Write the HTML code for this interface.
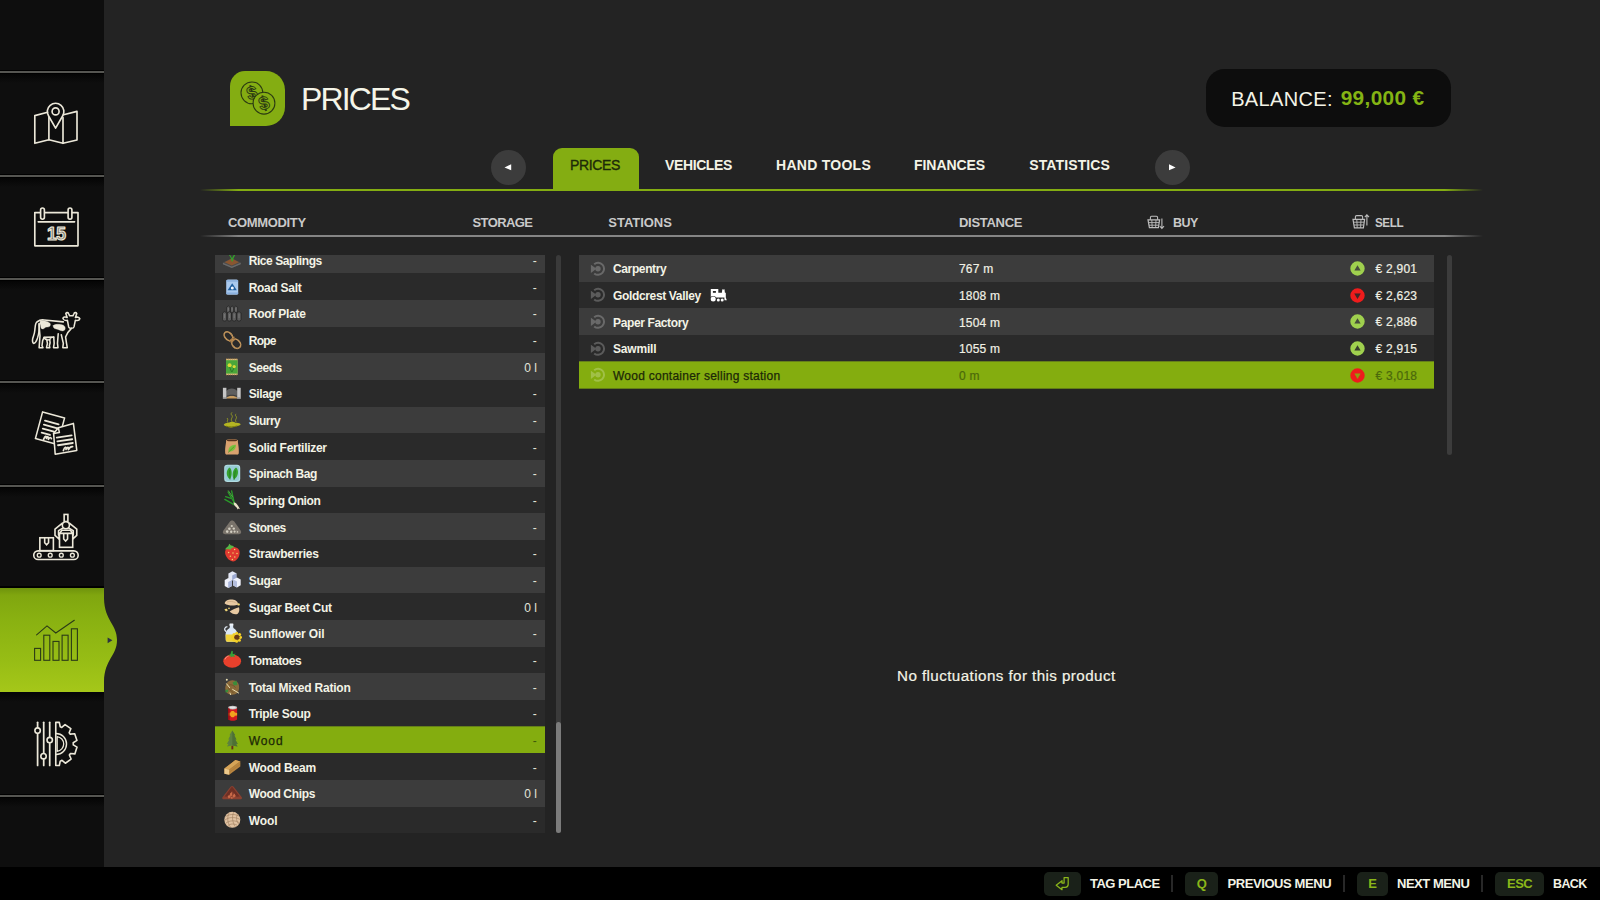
<!DOCTYPE html>
<html lang="en">
<head>
<meta charset="utf-8">
<title>Prices</title>
<style>
*{box-sizing:border-box;margin:0;padding:0}
html,body{width:1600px;height:900px;overflow:hidden;background:#232323;font-family:"Liberation Sans",sans-serif;color:#f3f3e6}
.abs{position:absolute}
#side{position:absolute;left:0;top:0;width:104px;height:867px;background:#0e0e0e}
.sep{position:absolute;left:0;width:104px;height:13px;background:linear-gradient(#000 0,#000 1px,#555551 1px,#555551 3px,#000 3px,#000 4.2px,#050505 4.2px,#0e0e0e 13px)}
.sico{position:absolute;left:0;width:104px}
#sel{position:absolute;left:0;top:588px;width:104px;height:104px;background:linear-gradient(#6f930c 0,#80a60f 7%,#89b111 30%,#97bd15 70%,#a5c719 100%)}
#foot{position:absolute;left:0;top:866.5px;width:1600px;height:34px;background:#000}
.t{position:absolute;white-space:nowrap;line-height:1}
.b{font-weight:bold}
/* header */
#ticon{position:absolute;left:230px;top:71px;width:55px;height:55px;background:#84ad12;border-radius:15px 19px 19px 0}
#bal{position:absolute;left:1206.3px;top:69px;width:244.7px;height:58.2px;border-radius:18.5px;background:#0d0d0d}
.circ{position:absolute;width:35px;height:35px;border-radius:50%;background:#3c3c3c}
#tab{position:absolute;left:553px;top:147.5px;width:85.5px;height:42px;border-radius:9px 9px 0 0;background:#84ad12}
#gline{position:absolute;left:200px;top:188.9px;width:1283px;height:2.2px;background:linear-gradient(90deg,rgba(132,173,18,0) 0,#84ad12 3%,#84ad12 97%,rgba(132,173,18,0) 100%)}
#hline{position:absolute;left:200px;top:235.1px;width:1283px;height:2px;background:linear-gradient(90deg,rgba(130,130,130,0) 0,#858585 3%,#858585 97%,rgba(130,130,130,0) 100%)}
.hd{font-size:13px;font-weight:bold;color:#c9c9c9}
/* lists */
#clist{position:absolute;left:215px;top:255px;width:330px;height:578.3px;overflow:hidden}
#clist .r{position:absolute;left:0;width:330px;height:26.667px}
#slist{position:absolute;left:579px;top:255px;width:854.5px;height:134.1px;overflow:hidden}
#slist .r{position:absolute;left:0;width:854.5px;height:26.667px}
.r.o{background:#3c3c3c}
.r.e{background:#2a2a2a}
.r.s{background:#84ad0f;box-shadow:0 0 0 .6px #8eb912}
.r .n{position:absolute;top:1.3px;line-height:26.667px;font-size:12px;font-weight:bold;white-space:nowrap;color:#f3f3e6}
.r.s .n{color:#1c2807;font-weight:normal;-webkit-text-stroke:.25px #1c2807}
.r.s .q{color:#3f5a0a}
.r .q{position:absolute;right:8.2px;top:1.3px;line-height:26.667px;font-size:12px;color:#e4e4da;white-space:nowrap}
.r svg{position:absolute}
.r .d,.r .p{position:absolute;top:1.4px;line-height:26.667px;font-size:12px;white-space:nowrap;color:#f0f0e4}
.r .p{letter-spacing:.25px;top:1.1px}
.r .d{letter-spacing:.2px}
.r .d,.r .p{-webkit-text-stroke:.2px currentColor}
.r.s .d,.r.s .p{color:#4b690b}
.sb{position:absolute;border-radius:3px;background:#3a3a3a}
.key{position:absolute;top:871.6px;height:24.7px;border-radius:5px;background:#1a2119;color:#8ab61a;font-weight:bold;font-size:13px;text-align:center;line-height:24.5px}
.fl{position:absolute;top:876.5px;font-size:13px;font-weight:bold;color:#f3f3e6;white-space:nowrap;line-height:14px}
.fs{position:absolute;top:875px;width:1.5px;height:16.5px;background:#282828}
</style>
</head>
<body>
<div id="side">
  <div class="sep" style="top:70.3px"></div>
  <div class="sep" style="top:173.6px"></div>
  <div class="sep" style="top:277px"></div>
  <div class="sep" style="top:380.2px"></div>
  <div class="sep" style="top:483.6px"></div>
  <div class="abs" style="left:0;top:586.3px;width:104px;height:1.7px;background:#000"></div>
  <div id="sel"></div>
  <div class="abs" style="left:0;top:692px;width:104px;height:10px;background:linear-gradient(#04040a 0,#04040a 1.5px,#060606 1.5px,#0e0e0e 10px)"></div>
  <div class="sep" style="top:793.6px"></div>
</div>
<svg class="abs" style="left:104px;top:588px" width="16" height="104" viewBox="104 588 16 104">
  <defs><linearGradient id="gsel" gradientUnits="userSpaceOnUse" x1="0" y1="588" x2="0" y2="692"><stop offset="0" stop-color="#6f930c"/><stop offset=".07" stop-color="#80a60f"/><stop offset=".3" stop-color="#89b111"/><stop offset=".7" stop-color="#97bd15"/><stop offset="1" stop-color="#a5c719"/></linearGradient></defs>
  <path d="M104 598.5 C104.5 621 117 624 117 640 C117 656 104.5 659 104 681.5 Z" fill="url(#gsel)"/>
  <path d="M107.6 637.4 L112.4 640.3 L107.6 643.2 Z" fill="#2c3240"/>
</svg>

<svg class="abs" style="left:0;top:0" width="104" height="867" viewBox="0 0 104 867" fill="none" stroke="#ece8d9" stroke-width="1.65" stroke-linejoin="round" stroke-linecap="round">
<g>
<path d="M47.6 112.3 L34.8 115.6 L34.8 143.3 L48.9 139.8 L63 143.3 L77 140 L77 111.4 L63.6 114.8"/>
<path d="M48.9 117.5 L48.9 139.8 M63 117.5 L63 143.3"/>
<path d="M55.6 128.2 L48.6 116 A8.3 8.3 0 1 1 62.6 116 Z"/>
<circle cx="55.6" cy="111.4" r="3.5"/>
</g>
<g>
<rect x="34.8" y="212.6" width="43.2" height="33.2"/>
<path d="M38.2 221.8 L74.6 221.8"/>
<rect x="40.6" y="208" width="3.8" height="11.2" rx="1.9" fill="#0e0e0e"/>
<rect x="68.1" y="208" width="3.8" height="11.2" rx="1.9" fill="#0e0e0e"/>
<text x="56.3" y="240.2" text-anchor="middle" font-family="Liberation Sans, sans-serif" font-weight="bold" font-size="17.5" stroke-width="1.1" fill="#7d7a70" letter-spacing="-0.5">15</text>
</g>
<g transform="translate(26 306) scale(0.053333)" stroke-width="29">
<path d="M218 292 C172 300 172 380 166 450 C160 540 132 580 124 620 C116 670 130 706 152 700 C186 690 200 640 216 600 C240 530 250 430 246 335"/>
<path d="M218 292 C245 266 290 256 340 262 L700 298"/>
<path d="M246 335 C250 430 256 500 262 560 L246 782 L318 782 L300 745 L312 650 L338 590"/>
<path d="M338 588 L520 584 M338 592 C362 640 430 652 462 612 M386 626 L402 700 L384 782 L446 782 L438 745 L452 690 L446 640"/>
<path d="M520 584 L528 700 L516 782 L600 782 L590 700 L604 520 M662 540 L700 700 L690 782 L774 782 L760 700 L742 580 C760 520 800 470 852 420"/>
<path d="M692 232 C702 206 742 200 772 216 L746 142 C760 114 792 120 802 150 L818 184 L880 184 L896 150 C906 120 938 114 952 142 L926 216 C956 200 998 210 1010 240 C1000 266 960 276 926 266 L900 392 C890 428 812 428 800 392 L776 266 C742 276 702 262 692 232 Z"/>
<path d="M270 280 C330 265 420 280 455 330 C470 380 430 400 390 395 C350 395 340 440 300 430 C270 420 280 370 265 340 C258 310 258 290 270 280 Z M510 365 C540 335 640 335 700 360 C745 385 745 440 715 460 C680 480 640 455 600 440 C560 430 500 420 510 365 Z" fill="#ece8d9" stroke-width="6"/>
</g>
<g stroke-width="1.55">
<path d="M42.6 411.9 L64.6 417.9 L57.4 444.6 L35.4 438.6 Z"/>
<path d="M45 420.6 L58.6 424.3 M43.9 424.6 L57.5 428.3 M42.8 428.6 L54 431.7 M41.7 432.6 L50 434.9" stroke-width="1.9"/>
<path d="M43.6 439.4 C45 435.6 46.8 435.4 46.4 438.4 C47.4 436 48.8 436 48.4 439.4 C49.6 437 50.8 437 51.4 438.6" stroke-width="1.7"/>
<path d="M58.4 427.8 L73.4 423.4 L76.8 450.4 L55.2 454.2 L53.6 433.4 Z" fill="#0e0e0e"/>
<path d="M58.4 427.8 L59.4 432.6 L53.6 433.4"/>
<path d="M56.8 437.6 L71.6 435.4 M57.4 441.4 L72.2 439.2 M58 445.2 L72.8 443" stroke-width="1.9"/>
<path d="M63.4 450.6 C64.6 446.6 66.6 446.2 66 449.4 C67.2 446.8 68.8 446.4 68.4 449.6 C69.6 447 71 446.4 72.6 446.6" stroke-width="1.7"/>
</g>
<g transform="translate(26 508) scale(0.064433)" stroke-width="25" stroke-linejoin="miter" fill="#0e0e0e">
<rect x="120" y="665" width="690" height="135" rx="67.5"/>
<circle cx="205" cy="732" r="30" stroke-width="21"/>
<circle cx="376" cy="732" r="30" stroke-width="21"/>
<circle cx="548" cy="732" r="30" stroke-width="21"/>
<circle cx="720" cy="732" r="30" stroke-width="21"/>
<rect x="215" y="462" width="210" height="200"/>
<path d="M290 474 L290 540 L320 572 L350 540 L350 474" fill="none"/>
<rect x="592" y="100" width="58" height="110"/>
<path d="M565 235 L450 328 L450 425 L515 482 L515 432 L505 415 L505 352 L590 302 Z" stroke-linejoin="round"/>
<path d="M673 235 L788 328 L788 425 L723 482 L723 432 L733 415 L733 352 L648 302 Z" stroke-linejoin="round"/>
<path d="M520 395 L558 345 L690 345 L725 395 Z" stroke-linejoin="round"/>
<rect x="520" y="395" width="205" height="215"/>
<path d="M585 407 L585 480 L615 512 L645 480 L645 407" fill="none"/>
<circle cx="619" cy="268" r="55"/>
</g>
<g stroke="#2b3a17" stroke-width="1.1" stroke-linejoin="miter" stroke-linecap="butt">
<rect x="34.6" y="648.4" width="6" height="11.9"/>
<rect x="43.8" y="635.2" width="6" height="25.1"/>
<rect x="53" y="641.4" width="6" height="18.9"/>
<rect x="62.1" y="635.2" width="6" height="25.1"/>
<rect x="71.4" y="628.8" width="6" height="31.5"/>
<path d="M36.6 634.8 L47 625.9 L55.8 633 L74.3 620.3" stroke-linecap="round"/>
</g>
<g transform="translate(26 714) scale(0.064433)" stroke-width="25" fill="#0e0e0e">
<path d="M180 128 L180 798" stroke-width="27"/>
<path d="M275 128 L275 798" stroke-width="27"/>
<path d="M368 128 L368 798" stroke-width="27"/>
<circle cx="180" cy="258" r="42"/>
<circle cx="368" cy="405" r="42"/>
<circle cx="272" cy="655" r="42"/>
<path d="M462 130 L517 130 L531 198 L555 209 L606 164 L696 227 L670 290 L687 313 L756 306 L791 410 L733 446 L734 479 L792 514 L758 619 L690 613 L673 636 L700 699 L611 764 L559 719 L531 732 L517 800 L462 800 Z" stroke-linejoin="round"/>
<path d="M466 302 A163 163 0 0 1 466 628" fill="none" stroke-width="22"/>
<path d="M484 350 A116 116 0 0 1 484 580 Z" fill="none" stroke-width="20"/>
</g>
</svg>
<!-- header -->
<div id="ticon"></div>
<svg class="abs" style="left:230px;top:71px" width="55" height="55" viewBox="0 0 55 55" fill="none" stroke="#2b3a12" stroke-width="1.05"><circle cx="21.9" cy="21.8" r="10.9"/><g font-family="Liberation Sans, sans-serif" font-weight="bold" font-size="18.5" text-anchor="middle" stroke-width=".95"><text x="21.9" y="28.1" transform="rotate(-14 21.9 21.8)">$</text></g><circle cx="34" cy="32.2" r="10.9" fill="#84ad12"/><g font-family="Liberation Sans, sans-serif" font-weight="bold" font-size="18.5" text-anchor="middle" stroke-width=".95"><text x="34" y="38.5" transform="rotate(-14 34 32.2)">$</text></g></svg>
<div class="t" id="title" style="left:301px;top:82.5px;font-size:32px;letter-spacing:-1.84px;color:#f5f5e8">PRICES</div>
<div id="bal"></div>
<div class="t" id="ballbl" style="left:1231.2px;top:88.5px;font-size:20px;color:#f3f3e6;letter-spacing:0.34px">BALANCE:</div>
<div class="t b" id="balval" style="left:1340.7px;top:88px;font-size:20.8px;color:#84b414;letter-spacing:.35px">99,000 €</div>

<div class="circ" style="left:490.7px;top:149.7px"></div>
<svg class="abs" style="left:503px;top:162px" width="10" height="10" viewBox="0 0 10 10"><path d="M1.5 5.4 L8.2 2.3 L8.2 8.3 Z" fill="#fff"/></svg>
<div class="circ" style="left:1155px;top:149.7px"></div>
<svg class="abs" style="left:1167px;top:162px" width="10" height="10" viewBox="0 0 10 10"><path d="M8.6 5.4 L2 2.3 L2 8.3 Z" fill="#fff"/></svg>
<div id="tab"></div>
<div class="t" id="tb0" style="left:570.0px;top:157.5px;font-size:14px;color:#1d2a08;letter-spacing:-0.35px;-webkit-text-stroke:.35px #1d2a08">PRICES</div>
<div class="t b" id="tb1" style="left:665.1px;top:157.5px;font-size:14px;letter-spacing:-0.41px">VEHICLES</div>
<div class="t b" id="tb2" style="left:776.0px;top:157.5px;font-size:14px;letter-spacing:0.27px">HAND TOOLS</div>
<div class="t b" id="tb3" style="left:914.1px;top:157.5px;font-size:14px;letter-spacing:-0.09px">FINANCES</div>
<div class="t b" id="tb4" style="left:1029.2px;top:157.5px;font-size:14px;letter-spacing:0.13px">STATISTICS</div>
<div id="gline"></div>

<div class="t hd" id="h0" style="left:228px;top:215.5px;letter-spacing:-.35px">COMMODITY</div>
<div class="t hd" id="h1" style="left:472.5px;top:215.5px;letter-spacing:-.6px">STORAGE</div>
<div class="t hd" id="h2" style="left:608.3px;top:215.5px;letter-spacing:-0.03px">STATIONS</div>
<div class="t hd" id="h3" style="left:959px;top:215.5px;letter-spacing:-0.29px">DISTANCE</div>
<div class="t hd" id="h4" style="left:1173px;top:215.5px;letter-spacing:-0.5px;transform:scaleX(.96);transform-origin:0 0">BUY</div>
<div class="t hd" id="h5" style="left:1374.7px;top:215.5px;letter-spacing:-0.5px;transform:scaleX(.9);transform-origin:0 0">SELL</div>
<svg class="abs" style="left:1146px;top:213px" width="20" height="18" viewBox="0 0 20 18" fill="none" stroke="#bdbdbd" stroke-width="1.1"><path d="M4.4 6.8 V4.4 Q4.4 3.2 5.6 3.2 H10.4 Q11.6 3.2 11.6 4.4 V6.8"/><path d="M2 6.9 H13.6 L12.4 14.6 H3.4 Z" stroke-width="1.2"/><path d="M2.6 9.6 H13 M3 12.2 H12.6 M5.8 7 L6.2 14.6 M10 7 L9.6 14.6" stroke-width=".9"/><path d="M15.9 5.4 V15.2 M13.8 13.2 L15.9 15.5 L18 13.2" stroke-width="1.1"/></svg>
<svg class="abs" style="left:1351px;top:212px" width="20" height="18" viewBox="0 0 20 18" fill="none" stroke="#bdbdbd" stroke-width="1.1"><path d="M4.4 7.2 V4.8 Q4.4 3.6 5.6 3.6 H10.4 Q11.6 3.6 11.6 4.8 V7.2"/><path d="M2 7.3 H13.6 L12.4 15.8 H3.4 Z" stroke-width="1.2"/><path d="M2.6 10.2 H13 M3 13 H12.6 M5.8 7.4 L6.2 15.8 M10 7.4 L9.6 15.8" stroke-width=".9"/><path d="M15.9 13.6 V3.2 M13.8 5.2 L15.9 2.9 L18 5.2" stroke-width="1.1"/></svg>
<div id="hline"></div>

<div id="clist">
<div class="r o" style="top:-8.33px"><svg style="left:7px;top:3.33px" width="20" height="20" viewBox="0 0 20 20"><path d="M.9 12.6 L9.8 8.2 L18.7 12.6 L18.7 14.2 L9.8 18 L.9 14.2 Z" fill="#4b4b4b"/><path d="M2.6 12.3 L9.8 8.6 L17 12.3 L9.8 15.6 Z" fill="#8a5630"/><path d="M.9 12.8 L9.8 16.4 L18.7 12.8 L18.7 14.2 L9.8 18 L.9 14.2 Z" fill="#6a6a6a"/><path d="M9.6 11.6 C9.4 8.6 8 6 5.6 3.6 C8 4.4 9.6 6.4 10 8.6 C10.6 6 12 4.2 14.4 3 C13 5.4 11.2 8 10.8 11.6 Z" fill="#35a02c"/></svg><span class="n" style="left:33.7px;letter-spacing:-0.43px">Rice Saplings</span><span class="q">-</span></div>
<div class="r e" style="top:18.33px"><svg style="left:7px;top:3.33px" width="20" height="20" viewBox="0 0 20 20"><rect x="4.2" y="2.4" width="12" height="15.4" rx="1.6" fill="#a9c9ee"/><rect x="4.2" y="3.4" width="12" height="1.1" fill="#7ea6d8"/><rect x="4.2" y="15.6" width="12" height="1.1" fill="#7ea6d8"/><path d="M10.2 6.2 L14.8 13.2 L5.6 13.2 Z" fill="#1f5f9f"/><circle cx="10.3" cy="10.9" r="1.5" fill="#f4f8ff"/></svg><span class="n" style="left:33.7px;letter-spacing:-0.29px">Road Salt</span><span class="q">-</span></div>
<div class="r o" style="top:45.00px"><svg style="left:7px;top:3.33px" width="20" height="20" viewBox="0 0 20 20"><g fill="#5e5e5e" stroke="#1f1f1f" stroke-width=".7"><path d="M4.6 4.4 q1.7 -3 3.4 0 v5 h-3.4 Z M8.4 4.4 q1.7 -3 3.4 0 v5 h-3.4 Z M12.2 4.4 q1.7 -3 3.4 0 v5 h-3.4 Z"/><path d="M.5 10 q2.1 -2.6 4.2 0 v6.4 l-1 1.6 h-2.2 l-1 -1.6 Z M5.3 10 q2.1 -2.6 4.2 0 v6.4 l-1 1.6 h-2.2 l-1 -1.6 Z M10.1 10 q2.1 -2.6 4.2 0 v6.4 l-1 1.6 h-2.2 l-1 -1.6 Z M14.9 10 q2.1 -2.6 4.2 0 v6.4 l-1 1.6 h-2.2 l-1 -1.6 Z"/></g><path d="M2.6 11 v4 M7.4 11 v4 M12.2 11 v4 M17 11 v4 M6.3 5 v2.6 M10.1 5 v2.6 M13.9 5 v2.6" stroke="#7c7c7c" stroke-width=".8"/></svg><span class="n" style="left:33.7px;letter-spacing:-0.22px">Roof Plate</span><span class="q">-</span></div>
<div class="r e" style="top:71.67px"><svg style="left:7px;top:3.33px" width="20" height="20" viewBox="0 0 20 20"><g fill="none" stroke="#c79b62" stroke-width="1.6"><ellipse cx="6.4" cy="6.2" rx="5" ry="3.5" transform="rotate(48 6.4 6.2)"/><ellipse cx="14.2" cy="13.8" rx="5" ry="3.9" transform="rotate(48 14.2 13.8)"/></g><path d="M7.4 11.4 L12.4 6.8 M8.8 12.8 L13.6 8.4" stroke="#b5864e" stroke-width="1.4"/><g fill="none" stroke="#8a6436" stroke-width=".5" stroke-dasharray=".8 1.2"><ellipse cx="6.4" cy="6.2" rx="5" ry="3.5" transform="rotate(48 6.4 6.2)"/><ellipse cx="14.2" cy="13.8" rx="5" ry="3.9" transform="rotate(48 14.2 13.8)"/></g></svg><span class="n" style="left:33.7px;letter-spacing:-0.72px">Rope</span><span class="q">-</span></div>
<div class="r o" style="top:98.33px"><svg style="left:7px;top:3.33px" width="20" height="20" viewBox="0 0 20 20"><rect x="4" y="1.8" width="11.6" height="16.2" fill="#d9bb7c"/><rect x="4" y="3.2" width="11.6" height="13.4" fill="#4aa63a"/><path d="M4 1.8 h11.6 M4 18 h11.6" stroke="#8a6a3a" stroke-width=".8" stroke-dasharray="1 1"/><circle cx="7.6" cy="8.2" r="2" fill="#d9d838"/><circle cx="12.2" cy="9.6" r="1.6" fill="#d9d838"/><path d="M7.6 10 L9.6 15 M12 11 L10 15" stroke="#2c7c28" stroke-width="1"/></svg><span class="n" style="left:33.7px;letter-spacing:-0.47px">Seeds</span><span class="q">0 l</span></div>
<div class="r e" style="top:125.00px"><svg style="left:7px;top:3.33px" width="20" height="20" viewBox="0 0 20 20"><path d="M4.2 15 L4.2 8.6 C6 4.6 13.6 4.6 15.4 8.6 L15.4 15 Z" fill="#5f5f5f"/><path d="M4 15.6 C6 11.8 13.6 11.8 15.6 15.6 Z" fill="#c89c60"/><path d="M4 13.2 C7 11.2 12.6 11.2 15.6 13.2 L15.6 14.2 C12.6 12.2 7 12.2 4 14.2 Z" fill="#3a3a3a"/><rect x=".9" y="4.8" width="3.5" height="10.9" fill="#c6c6c6"/><rect x="15.2" y="4.8" width="3.5" height="10.9" fill="#c6c6c6"/><rect x=".9" y="14.4" width="3.5" height="1.3" fill="#8f8f8f"/><rect x="15.2" y="14.4" width="3.5" height="1.3" fill="#8f8f8f"/></svg><span class="n" style="left:33.7px;letter-spacing:-0.39px">Silage</span><span class="q">-</span></div>
<div class="r o" style="top:151.67px"><svg style="left:7px;top:3.33px" width="20" height="20" viewBox="0 0 20 20"><path d="M1.8 14.6 C3 12.8 6 13.2 7.2 12.6 C9 11.4 12 11.8 13.4 12.8 C15.6 12.4 18.4 13.2 18.7 14.4 C18 15.8 15 15.6 13.6 16.6 C11 17.8 7 17.6 5.4 16.4 C3.4 16.4 1.8 15.8 1.8 14.6 Z" fill="#b4b422"/><path d="M4 16.2 C7 17.2 12 17.2 15.4 15.8" stroke="#74740f" stroke-width=".9" fill="none"/><g fill="none" stroke="#a0a822" stroke-width="1" stroke-linecap="round" opacity=".85"><path d="M5.6 12.4 C4.2 11 6.8 10 5.4 8.4"/><path d="M9.8 11.4 C7.6 9 12 7 9.6 5 C8.6 4 9.4 3 9.8 2.6"/><path d="M14 11.8 C12 9.8 16 8 13.8 6 C13 5.2 13.6 4.6 13.8 4.2"/></g></svg><span class="n" style="left:33.7px;letter-spacing:-0.53px">Slurry</span><span class="q">-</span></div>
<div class="r e" style="top:178.33px"><svg style="left:7px;top:3.33px" width="20" height="20" viewBox="0 0 20 20"><path d="M4 3.2 C6 2 14 2 16 3.2 C15.4 5 17.2 9 16.8 16 C16.8 17.4 15.6 17.8 14.4 17.6 L5.6 17.6 C4.4 17.8 3.2 17.4 3.2 16 C2.8 9 4.6 5 4 3.2 Z" fill="#d9a26e"/><path d="M4.4 3.4 C7 2.2 13 2.2 15.6 3.4 C13 4.6 7 4.6 4.4 3.4 Z" fill="#55301a"/><path d="M6.6 14.6 C5.6 10.6 9.6 7.4 14 7.8 C14 12 11 15 6.6 14.6 Z" fill="#78c23e"/><path d="M6 15.6 L12.4 9.4" stroke="#4a8a24" stroke-width=".7"/></svg><span class="n" style="left:33.7px;letter-spacing:-0.29px">Solid Fertilizer</span><span class="q">-</span></div>
<div class="r o" style="top:205.00px"><svg style="left:7px;top:3.33px" width="20" height="20" viewBox="0 0 20 20"><rect x="2.2" y="1.8" width="16" height="17.2" rx="3.2" fill="#b2dde2"/><rect x="3.2" y="2.8" width="14" height="15.2" rx="2.4" fill="#98ccd6"/><path d="M8 16 C4 14 3.6 7 7.4 4.4 C10.4 6 10.4 13 8 16 Z M12 16.4 C9.6 13 10.6 6.4 14 4.6 C17.4 7 16.4 14.4 12 16.4 Z" fill="#36a12e"/><path d="M8 16.6 L7.6 7 M12 17 L13.4 7.4" stroke="#1f7420" stroke-width=".7"/></svg><span class="n" style="left:33.7px;letter-spacing:-0.41px">Spinach Bag</span><span class="q">-</span></div>
<div class="r e" style="top:231.67px"><svg style="left:7px;top:3.33px" width="20" height="20" viewBox="0 0 20 20"><g fill="none" stroke="#2a9a2a" stroke-width="1.3" stroke-linecap="round"><path d="M13 14 L6 2"/><path d="M12.4 13.6 L9.6 1"/><path d="M12 14.6 L2.8 9.4"/><path d="M9 8.4 L3.6 6.6"/><path d="M10.6 7 L6.4 .8" stroke="#58c848" stroke-width=".8"/></g><path d="M11.6 12.6 C13.4 12.2 15 14 16.2 16 L18 19.2 L16.4 18.4 L15.8 19.4 L14.6 17.6 C13 16.6 11.6 14.8 11.6 12.6 Z" fill="#ebe3c9"/></svg><span class="n" style="left:33.7px;letter-spacing:-0.34px">Spring Onion</span><span class="q">-</span></div>
<div class="r o" style="top:258.33px"><svg style="left:7px;top:3.33px" width="20" height="20" viewBox="0 0 20 20"><path d="M7.6 5 C8.8 3 11.4 3 12.6 5 L18.8 13.8 C19.8 15.6 18.8 17.2 17 17.2 L3 17.2 C1.2 17.2 .2 15.6 1.2 13.8 Z" fill="#79736b"/><g fill="#d3cfc2"><circle cx="9.8" cy="9" r="1.1"/><circle cx="7.4" cy="11.8" r="1.3"/><circle cx="11.8" cy="11.6" r="1.2"/><circle cx="5.2" cy="14.6" r="1.3"/><circle cx="9.2" cy="14.8" r="1.2"/><circle cx="12.6" cy="14.6" r="1.1"/><path d="M14.8 13.6 L16.6 15 L14.8 16 Z"/></g></svg><span class="n" style="left:33.7px;letter-spacing:-0.49px">Stones</span><span class="q">-</span></div>
<div class="r e" style="top:285.00px"><svg style="left:7px;top:3.33px" width="20" height="20" viewBox="0 0 20 20"><path d="M3.4 7.4 C5 3.8 13 2.6 16.4 6 C19 9 17.4 15 13.4 17.8 C11.6 19 9.4 18.6 7.4 17 C4.4 14.6 2.2 10.6 3.4 7.4 Z" fill="#e03a30"/><path d="M3 6.8 C3.6 4.6 5.4 4.4 6.4 3 L7.2 .8 L9 2.6 C10.6 2.4 11.8 3.2 12 4.2 C10 4.6 9 5.4 8.2 6.8 C6.6 6.2 4.6 6.2 3 6.8 Z" fill="#57b846"/><g fill="#f3cf6a"><circle cx="12.6" cy="6.6" r=".75"/><circle cx="6.6" cy="9.6" r=".75"/><circle cx="11" cy="10" r=".75"/><circle cx="15" cy="10.6" r=".75"/><circle cx="8.4" cy="13.2" r=".75"/><circle cx="12.8" cy="14" r=".75"/><circle cx="10.4" cy="16.6" r=".75"/></g></svg><span class="n" style="left:33.7px;letter-spacing:-0.23px">Strawberries</span><span class="q">-</span></div>
<div class="r o" style="top:311.67px"><svg style="left:7px;top:3.33px" width="20" height="20" viewBox="0 0 20 20"><path d="M6.4 3.4 L10.4 1.2 L14.4 3.2 L14.4 8.6 L10.2 10.6 L6.4 8.6 Z" fill="#e4e8f6"/><path d="M10.2 5.4 L14.4 3.2 L14.4 8.6 L10.2 10.6 Z" fill="#9ca9d2"/><path d="M2.7 10 L6.4 8 L10 10 L10 16 L6.2 18.1 L2.7 16 Z" fill="#eef0fa"/><path d="M6.2 12 L10 10 L10 16 L6.2 18.1 Z" fill="#a7b3d8"/><path d="M11.2 9.6 L15 7.6 L18.7 9.6 L18.7 15.2 L15 17.4 L11.2 15.4 Z" fill="#eef0fa"/><path d="M11.2 9.6 L15 11.6 L15 17.4 L11.2 15.4 Z" fill="#b4bedf"/></svg><span class="n" style="left:33.7px;letter-spacing:-0.27px">Sugar</span><span class="q">-</span></div>
<div class="r e" style="top:338.33px"><svg style="left:7px;top:3.33px" width="20" height="20" viewBox="0 0 20 20"><path d="M2.7 6.4 C3 3.4 7 2.2 10.4 2.6 C13.8 3 16.2 5 16 7.4 C13 9 6 9 2.7 6.4 Z" fill="#e7c9a2"/><path d="M7.6 14.6 C10 12.6 14 10.8 17 10.2 C17.8 12.6 17.2 15.6 15.4 17 C12.4 17.6 9.4 16.6 7.6 14.6 Z" fill="#e7c9a2"/><path d="M5 5 C8 4 11 4.4 13.6 5.6" stroke="#c7a57c" stroke-width=".7" fill="none"/><circle cx="16.6" cy="7.4" r="1.2" fill="#f2d878"/><path d="M2.4 12.6 L4.4 11.6 L6 13.2 L4 14.4 Z" fill="#f2d878"/><circle cx="7" cy="11.4" r=".8" fill="#f2d878"/></svg><span class="n" style="left:33.7px;letter-spacing:-0.26px">Sugar Beet Cut</span><span class="q">0 l</span></div>
<div class="r o" style="top:365.00px"><svg style="left:7px;top:3.33px" width="20" height="20" viewBox="0 0 20 20"><path d="M5.4 3.6 C2.4 3.8 1.6 7.4 4.4 8.6" fill="none" stroke="#e4ecf6" stroke-width="1.2"/><rect x="7.4" y=".5" width="4" height="2.4" rx=".6" fill="#eef3fa"/><path d="M8 2.6 L11 2.6 L11.4 5 C14.6 6.6 15.6 9.6 15.4 12.4 L15.2 17 C15.2 18.2 14.4 18.8 13.2 18.8 L5.8 18.8 C4.6 18.8 3.8 18.2 3.8 17 L3.6 12.4 C3.4 9.6 4.4 6.6 7.6 5 Z" fill="#dbe7f4"/><path d="M3.6 11.4 L15.4 11.4 L15.2 17 C15.2 18.2 14.4 18.8 13.2 18.8 L5.8 18.8 C4.6 18.8 3.8 18.2 3.8 17 Z" fill="#f0d23c"/><g fill="#f4cf24"><circle cx="14.7" cy="10.3" r="1.5"/><circle cx="17.6" cy="11.6" r="1.5"/><circle cx="18.6" cy="14.4" r="1.5"/><circle cx="17.4" cy="17.2" r="1.5"/><circle cx="14.6" cy="18.2" r="1.5"/><circle cx="11.8" cy="17" r="1.5"/><circle cx="10.8" cy="14.2" r="1.5"/><circle cx="12" cy="11.4" r="1.5"/></g><circle cx="14.7" cy="14.2" r="2.5" fill="#6a3a14"/></svg><span class="n" style="left:33.7px;letter-spacing:-0.13px">Sunflower Oil</span><span class="q">-</span></div>
<div class="r e" style="top:391.67px"><svg style="left:7px;top:3.33px" width="20" height="20" viewBox="0 0 20 20"><ellipse cx="10.2" cy="11.2" rx="8.9" ry="6.6" fill="#e8402c"/><path d="M3 9.4 C3.6 7.4 5.4 6.2 6.6 6" stroke="#f6a090" stroke-width=".9" fill="none"/><path d="M9.6 .8 L10.8 1 L10.8 4 L13.8 3.8 L12 5.6 L13.2 7 L10.4 6.4 L8.6 7.4 L8.6 5.8 L6 5.6 L8.4 4.2 Z" fill="#36a038"/></svg><span class="n" style="left:33.7px;letter-spacing:-0.4px">Tomatoes</span><span class="q">-</span></div>
<div class="r o" style="top:418.33px"><svg style="left:7px;top:3.33px" width="20" height="20" viewBox="0 0 20 20"><path d="M5 6 C7 2.6 13 2.4 15.6 5.4 C17.8 8 17.6 13 15.4 15.8 C13 18.6 7 18.4 4.6 15.4 C2.6 12.6 3 8.6 5 6 Z" fill="#8a6a3a"/><path d="M10.6 5.4 L14.4 3.6 L15.4 8 L12 8.6 Z M3.4 13 L6.4 12.4 L6 15 L3.6 15.6 Z" fill="#3a8c3a"/><g stroke="#e9deb2" stroke-width="1" stroke-linecap="round"><path d="M4.6 6.8 L7.6 10.6"/><path d="M10.6 12.4 L16.6 16"/><path d="M8 16 L8.6 17.6"/></g><circle cx="4.8" cy="2.8" r="1" fill="#e9deb2"/><path d="M7 8 C9 7 12 8.6 13.6 10.6 M6 11.4 C8 12.6 10 14 11.4 16" stroke="#6a4c24" stroke-width=".7" fill="none"/></svg><span class="n" style="left:33.7px;letter-spacing:-0.22px">Total Mixed Ration</span><span class="q">-</span></div>
<div class="r e" style="top:445.00px"><svg style="left:7px;top:3.33px" width="20" height="20" viewBox="0 0 20 20"><path d="M6.2 4.6 L15.1 4.6 L15.1 16.4 C13 18.2 8.4 18.2 6.2 16.4 Z" fill="#d21920"/><ellipse cx="10.65" cy="4.6" rx="4.45" ry="1.9" fill="#b9b9b9"/><ellipse cx="10.65" cy="4.6" rx="3.2" ry="1.1" fill="#e6e6e6"/><path d="M6.2 10 L8.6 9.4 C9 7.6 12.2 7.6 12.8 9.4 L15.1 10 L15.1 12.4 L12.8 12.8 C12.2 14.8 9 14.8 8.6 12.8 L6.2 12.4 Z" fill="#f2a21e"/><rect x="6.2" y="5.4" width="1.4" height="11.4" fill="#8f0d14"/></svg><span class="n" style="left:33.7px;letter-spacing:-0.33px">Triple Soup</span><span class="q">-</span></div>
<div class="r s" style="top:471.67px"><svg style="left:7px;top:3.33px" width="20" height="20" viewBox="0 0 20 20"><rect x="9.4" y="15.6" width="1.9" height="3.8" fill="#6a2c1c"/><path d="M10.3 .5 L13.2 5.2 L12.2 5.2 L14.4 9.4 L13.2 9.4 L15.8 14 L14 13.8 L15.6 16.4 L10.3 15.6 L5 16.4 L6.6 13.8 L4.8 14 L7.4 9.4 L6.2 9.4 L8.4 5.2 L7.4 5.2 Z" fill="#5c8040"/><path d="M10.3 .5 L13.2 5.2 L12.2 5.2 L14.4 9.4 L13.2 9.4 L15.8 14 L14 13.8 L15.6 16.4 L10.3 15.6 Z" fill="#4e7034"/></svg><span class="n" style="left:33.7px;letter-spacing:0.95px">Wood</span><span class="q">-</span></div>
<div class="r e" style="top:498.33px"><svg style="left:7px;top:3.33px" width="20" height="20" viewBox="0 0 20 20"><path d="M2.4 11.6 L13.4 3.1 L18.3 4.4 L18.3 9.6 L7.2 17.8 L2.4 16.8 Z" fill="#b98540"/><path d="M2.4 11.6 L13.4 3.1 L18.3 4.4 L7.2 12.8 Z" fill="#d6a458"/><path d="M2.4 11.6 L7.2 12.8 L7.2 17.8 L2.4 16.8 Z" fill="#ecc98c"/><path d="M7.2 12.8 L18.3 4.4 M7.2 15.2 L18.3 7" stroke="#a87a34" stroke-width=".6"/></svg><span class="n" style="left:33.7px;letter-spacing:-0.21px">Wood Beam</span><span class="q">-</span></div>
<div class="r o" style="top:525.00px"><svg style="left:7px;top:3.33px" width="20" height="20" viewBox="0 0 20 20"><path d="M8.6 3.8 C9.4 2.6 10.8 2.6 11.6 3.8 L19.6 14 C20.4 15.2 19.8 16.3 18.4 16.3 L1.8 16.3 C.4 16.3 -.2 15.2 .6 14 Z" fill="#8a4030"/><path d="M10 3.6 L17.6 13.4 L14.6 13.8 L10 8 L5.6 13.8 L2.6 13.4 Z" fill="#6e2f24"/><g fill="#c96a48"><path d="M8 10.6 L10 9 L10 12.6 L8.2 13.8 Z"/><path d="M10.6 12.6 L12.6 10.6 L13.6 13 L11.6 15 Z"/><path d="M5.6 13 L7.6 12 L8.6 14.6 L6.6 15.4 Z"/><path d="M9 14.2 L10.4 13.4 L10.8 15.6 L9.2 15.8 Z"/></g></svg><span class="n" style="left:33.7px;letter-spacing:-0.35px">Wood Chips</span><span class="q">0 l</span></div>
<div class="r e" style="top:551.67px"><svg style="left:7px;top:3.33px" width="20" height="20" viewBox="0 0 20 20"><circle cx="10.3" cy="9.8" r="8" fill="#e0c2a2"/><g fill="none" stroke="#a58464" stroke-width=".7"><path d="M3.4 7 C6 4.4 12 3.4 16.6 6"/><path d="M2.6 10.4 C6 7 13 6.6 17.8 9.4"/><path d="M3.4 13.6 C7 10 14 10 17.6 13"/><path d="M5.6 16 C8 13.4 13 13.4 15.6 15.6"/><path d="M7 3 C5 7 5.4 13 8.4 17"/><path d="M11.6 2.2 C9.6 7 10.6 13 13.4 16.8"/><path d="M15.4 4 C13.8 8 14.6 12 16.8 14"/></g></svg><span class="n" style="left:33.7px;letter-spacing:-0.05px">Wool</span><span class="q">-</span></div>
</div>
<div class="sb" style="left:556.2px;top:255px;width:5px;height:578px"></div>
<div class="sb" style="left:556.2px;top:722px;width:5px;height:111.2px;background:#7b7b7b"></div>

<div id="slist">
<div class="r o" style="top:0.00px"><svg style="left:10px;top:4.5px" width="18" height="18" viewBox="0 0 18 18" opacity=".23"><path d="M5.2 4.2 A6 6 0 1 1 5.2 13.4" fill="none" stroke="#fff" stroke-width="2"/><circle cx="9" cy="8.8" r="2.7" fill="#fff"/><path d="M1.9 4.8 L7.4 8.8 L1.9 12.9 Z" fill="#fff"/></svg><span class="n" style="left:34px;letter-spacing:-0.37px">Carpentry</span><span class="d" style="left:380px">767 m</span><svg style="left:770.7px;top:6px" width="15" height="15" viewBox="0 0 15 15"><path fill-rule="evenodd" d="M7.5 .3 A7.2 7.2 0 1 0 7.5 14.7 A7.2 7.2 0 1 0 7.5 .3 Z M7.5 4.2 L10.6 9.6 L4.4 9.6 Z" fill="#9fd04e"/><path d="M7.5 4.2 L10.6 9.6 L4.4 9.6 Z" fill="#9fd04e" opacity=".12"/></svg><span class="p" style="left:796.5px">€ 2,901</span></div>
<div class="r e" style="top:26.67px"><svg style="left:10px;top:4.5px" width="18" height="18" viewBox="0 0 18 18" opacity=".23"><path d="M5.2 4.2 A6 6 0 1 1 5.2 13.4" fill="none" stroke="#fff" stroke-width="2"/><circle cx="9" cy="8.8" r="2.7" fill="#fff"/><path d="M1.9 4.8 L7.4 8.8 L1.9 12.9 Z" fill="#fff"/></svg><span class="n" style="left:34px;letter-spacing:-0.35px">Goldcrest Valley</span><svg style="left:131px;top:6.4px" width="18" height="15" viewBox="0 0 18 15"><g fill="#fff"><path d="M.8 1 H8.3 V4.7 H11.9 L12.2 2.2 L11.9 1.4 H14.9 L14.6 2.2 L14.9 4.7 H15.8 V9.6 L16.8 12.3 H14.4 V9.6 H.8 Z"/></g><rect x="2.9" y="3" width="3" height="1.8" fill="#2a2a2a"/><circle cx="3.2" cy="11.1" r="3.1" fill="#2a2a2a"/><circle cx="3.2" cy="11.1" r="2.5" fill="#fff"/><circle cx="8.3" cy="12" r="2.1" fill="#2a2a2a"/><circle cx="8.3" cy="12" r="1.5" fill="#fff"/><circle cx="12.2" cy="12" r="2.1" fill="#2a2a2a"/><circle cx="12.2" cy="12" r="1.5" fill="#fff"/></svg><span class="d" style="left:380px">1808 m</span><svg style="left:770.7px;top:6px" width="15" height="15" viewBox="0 0 15 15"><path fill-rule="evenodd" d="M7.5 .3 A7.2 7.2 0 1 0 7.5 14.7 A7.2 7.2 0 1 0 7.5 .3 Z M7.5 11 L10.7 5.4 L4.3 5.4 Z" fill="#ee1c1c"/><path d="M7.5 11 L10.7 5.4 L4.3 5.4 Z" fill="#ee1c1c" opacity=".12"/></svg><span class="p" style="left:796.5px">€ 2,623</span></div>
<div class="r o" style="top:53.33px"><svg style="left:10px;top:4.5px" width="18" height="18" viewBox="0 0 18 18" opacity=".23"><path d="M5.2 4.2 A6 6 0 1 1 5.2 13.4" fill="none" stroke="#fff" stroke-width="2"/><circle cx="9" cy="8.8" r="2.7" fill="#fff"/><path d="M1.9 4.8 L7.4 8.8 L1.9 12.9 Z" fill="#fff"/></svg><span class="n" style="left:34px;letter-spacing:-0.36px">Paper Factory</span><span class="d" style="left:380px">1504 m</span><svg style="left:770.7px;top:6px" width="15" height="15" viewBox="0 0 15 15"><path fill-rule="evenodd" d="M7.5 .3 A7.2 7.2 0 1 0 7.5 14.7 A7.2 7.2 0 1 0 7.5 .3 Z M7.5 4.2 L10.6 9.6 L4.4 9.6 Z" fill="#9fd04e"/><path d="M7.5 4.2 L10.6 9.6 L4.4 9.6 Z" fill="#9fd04e" opacity=".12"/></svg><span class="p" style="left:796.5px">€ 2,886</span></div>
<div class="r e" style="top:80.00px"><svg style="left:10px;top:4.5px" width="18" height="18" viewBox="0 0 18 18" opacity=".23"><path d="M5.2 4.2 A6 6 0 1 1 5.2 13.4" fill="none" stroke="#fff" stroke-width="2"/><circle cx="9" cy="8.8" r="2.7" fill="#fff"/><path d="M1.9 4.8 L7.4 8.8 L1.9 12.9 Z" fill="#fff"/></svg><span class="n" style="left:34px;letter-spacing:-0.2px">Sawmill</span><span class="d" style="left:380px">1055 m</span><svg style="left:770.7px;top:6px" width="15" height="15" viewBox="0 0 15 15"><path fill-rule="evenodd" d="M7.5 .3 A7.2 7.2 0 1 0 7.5 14.7 A7.2 7.2 0 1 0 7.5 .3 Z M7.5 4.2 L10.6 9.6 L4.4 9.6 Z" fill="#9fd04e"/><path d="M7.5 4.2 L10.6 9.6 L4.4 9.6 Z" fill="#9fd04e" opacity=".12"/></svg><span class="p" style="left:796.5px">€ 2,915</span></div>
<div class="r s" style="top:106.67px"><svg style="left:10px;top:4.5px" width="18" height="18" viewBox="0 0 18 18" opacity=".23"><path d="M5.2 4.2 A6 6 0 1 1 5.2 13.4" fill="none" stroke="#fff" stroke-width="2"/><circle cx="9" cy="8.8" r="2.7" fill="#fff"/><path d="M1.9 4.8 L7.4 8.8 L1.9 12.9 Z" fill="#fff"/></svg><span class="n" style="left:34px;letter-spacing:0.25px">Wood container selling station</span><span class="d" style="left:380px">0 m</span><svg style="left:770.7px;top:6px" width="15" height="15" viewBox="0 0 15 15"><path fill-rule="evenodd" d="M7.5 .3 A7.2 7.2 0 1 0 7.5 14.7 A7.2 7.2 0 1 0 7.5 .3 Z M7.5 11 L10.7 5.4 L4.3 5.4 Z" fill="#ee1c1c"/><path d="M7.5 11 L10.7 5.4 L4.3 5.4 Z" fill="#ee1c1c" opacity=".12"/></svg><span class="p" style="left:796.5px">€ 3,018</span></div>
</div>
<div class="sb" style="left:1447px;top:254.5px;width:4.5px;height:200px;background:#3c3c3c"></div>

<div class="t" id="nofl" style="left:897.0px;top:667.7px;font-size:15.2px;-webkit-text-stroke:.2px #f3f3e6;color:#f3f3e6;letter-spacing:0.42px">No fluctuations for this product</div>

<div id="foot"></div>
<div class="key" style="left:1044px;width:36.5px"></div>
<svg class="abs" style="left:1044px;top:871.5px" width="37" height="25" viewBox="1044 871.5 37 25" fill="none" stroke="#8ab61a" stroke-width="1.25" stroke-linejoin="round"><path d="M1064.1 877.1 L1068.2 877.1 L1068.2 883.8 Q1068.2 886.8 1065.2 886.8 L1062 886.8 L1062 889.2 L1056.2 884.7 L1062 880.2 L1062 882.6 L1064.1 882.6 Z"/></svg>
<div class="fl" id="f0" style="left:1090.0px;letter-spacing:-0.5px">TAG PLACE</div>
<div class="fs" style="left:1171px"></div>
<div class="key" style="left:1185.2px;width:33.2px">Q</div>
<div class="fl" id="f1" style="left:1227.4px;letter-spacing:-0.4px">PREVIOUS MENU</div>
<div class="fs" style="left:1343px"></div>
<div class="key" style="left:1357.2px;width:31px">E</div>
<div class="fl" id="f2" style="left:1397.0px;letter-spacing:-0.47px">NEXT MENU</div>
<div class="fs" style="left:1481px"></div>
<div class="key" style="left:1495.4px;width:48.4px;letter-spacing:-.6px">ESC</div>
<div class="fl" id="f3" style="left:1553px;letter-spacing:-0.6px;transform:scaleX(.955);transform-origin:0 0">BACK</div>
</body>
</html>
